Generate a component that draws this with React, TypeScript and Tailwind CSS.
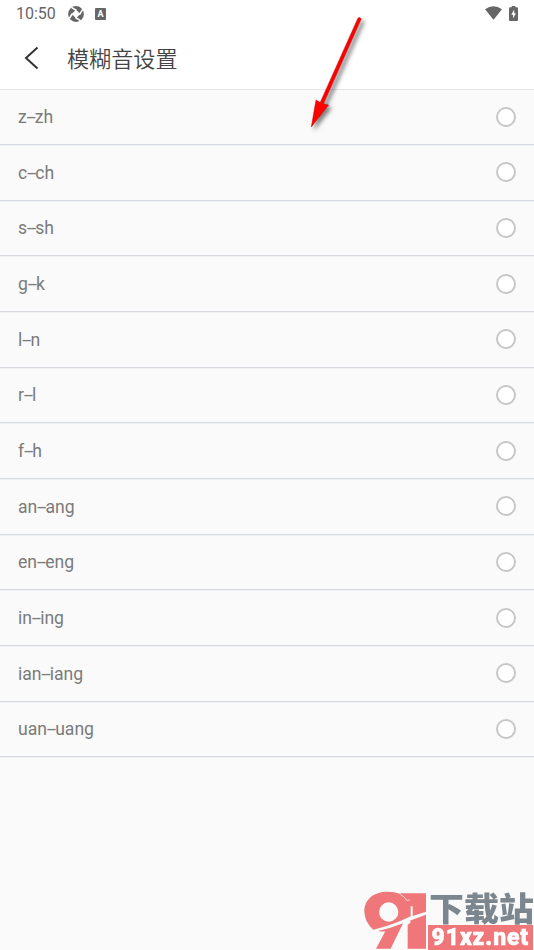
const pairs = [
  ['z', 'zh'], ['c', 'ch'], ['s', 'sh'], ['g', 'k'], ['l', 'n'], ['r', 'l'],
  ['f', 'h'], ['an', 'ang'], ['en', 'eng'], ['in', 'ing'], ['ian', 'iang'], ['uan', 'uang'],
];

function StatusBar() {
  return (
    <div className="flex h-[28px] items-center pl-[16px] pr-[16px] text-[#666]">
      <span className="w-[52px] text-[16px] leading-[28px]">10:50</span>
      <svg className="-mt-px block h-4 w-4" viewBox="0 0 16 16">
        <circle cx="8" cy="8" r="7.9" fill="#666" />
        <path d="M8 3.700 12.300 8 8 12.300 3.700 8z" fill="#fff" />
        <path d="M8.500 4.500 3.500 1.300M11.500 8.500 14.700 3.500M7.500 11.500 12.500 14.700M4.500 7.500 1.300 12.500" stroke="#fff" strokeWidth="1.500" />
      </svg>
      <span className="ml-[11px] flex h-[12px] w-[11px] items-center justify-center rounded-[1px] bg-[#666] text-[9px] font-bold leading-none text-white">A</span>
      <svg className="-mt-[3px] ml-auto block h-[14px] w-[17px]" viewBox="0 0 17 14">
        <path d="M0 3.200Q8.500-2.600 17 3.200L8.500 13.700z" fill="#666" />
      </svg>
      <svg className="-mt-[2px] ml-[7px] block h-[15px] w-[9px]" viewBox="0 0 9 15">
        <path d="M2.700 0h3.600v1.300H8q1 0 1 1V14q0 1-1 1H1q-1 0-1-1V2.300q0-1 1-1h1.700z" fill="#666" />
        <path d="M5.200 3.600 2.300 8.700h1.800v3.700l2.800-5.200H5.200z" fill="#fff" />
      </svg>
    </div>
  );
}

function Watermark() {
  return (
    <div className="absolute bottom-0 right-0 flex h-[64px] w-[174px]">
      <svg className="block h-[64px] w-[68px] shrink-0" viewBox="0 0 204 192">
        <path fillRule="evenodd" fill="#ef7779" d="M13 76C13 40 42 17 82 17Q105 17 121 24L123 22H198V77L158 90V61H152V91Q95 119 40 131Q13 108 13 76M57 78a29 29 0 1 0 58 0a29 29 0 1 0-58 0" />
        <path d="M121 26Q135 32 140 43L150 42" fill="none" stroke="#fafafa" strokeWidth="2" />
        <path fill="#ef7779" d="M54 135Q92 127 129 112Q121 129 92 188H48L76 136Q64 138 54 135M145 106 198 86V188H143V116L151 111V104z" />
      </svg>
      <div className="flex w-[106px] shrink-0 flex-col">
        <div className="h-[39px] origin-left scale-x-[1.06] whitespace-nowrap pl-[1px] font-['Noto_Sans_CJK_SC',sans-serif] text-[33px] font-black leading-[42px] text-[#7c868e]">下载站</div>
        <div className="flex h-[25px] w-[105px] items-center justify-center bg-[#ef7779] text-white">
          <span className="block scale-x-[.95] text-[24px] font-black leading-[25px] tracking-[1px] [-webkit-text-stroke:0.6px_white]">91xz.net</span>
        </div>
      </div>
    </div>
  );
}

export default function App() {
  return (
    <main className="relative h-[950px] w-[534px] overflow-hidden bg-[#fafafa] font-['Roboto',sans-serif]">
      <header className="h-[90px] border-b border-[#e4e5e6] bg-white">
        <StatusBar />
        <div className="flex h-[60px] items-center">
          <svg className="ml-[24px] block h-[24px] w-[16px]" viewBox="0 0 16 24">
            <path d="M13.500 1.500 2 12l11.500 10.500" fill="none" stroke="#333" strokeWidth="2" />
          </svg>
          <h1 className="-mt-[3px] ml-[27px] font-['Noto_Sans_CJK_SC',sans-serif] text-[22.100px] font-[350] leading-[30px] text-[#444]">模糊音设置</h1>
        </div>
      </header>
      <ul className="-mt-[0.600px]">
        {pairs.map(([first, second]) => (
          <li key={first + second} className="flex h-[55.680px] items-center justify-between border-b border-[#d6d9dd] px-[18px] shadow-[0_1px_0_#eff1f3]">
            <span className="pt-[0.600px] text-[17.600px] leading-6 text-[#7b7b7b]">{first}<span className="tracking-[-0.800px]">--</span>{second}</span>
            <span className="h-5 w-5 rounded-full border-2 border-[#c7c7ca] bg-white" />
          </li>
        ))}
      </ul>
      <svg className="absolute left-[300px] top-[10px] h-[125px] w-[75px] drop-shadow-[3px_3px_2px_rgba(0,0,0,0.5)]" viewBox="300 10 75 125">
        <path d="M358 18Q360.200 16.500 361.200 19L323.500 103.800 328.500 105 311.300 127 316 100 320.200 102.500z" fill="#f00" stroke="#c00d0d" strokeWidth=".5" />
      </svg>
      <Watermark />
    </main>
  );
}
